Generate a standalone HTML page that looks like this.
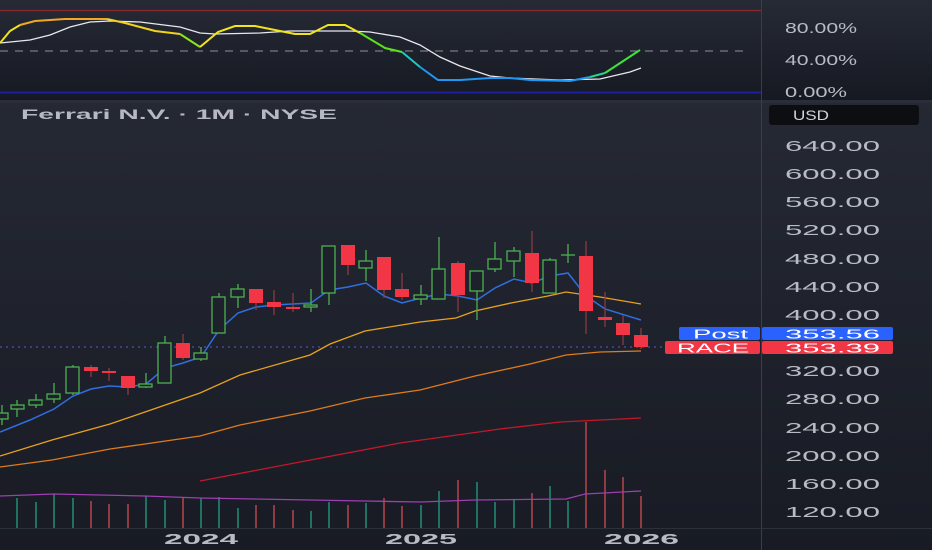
<!DOCTYPE html>
<html><head><meta charset="utf-8"><style>
html,body{margin:0;padding:0;background:#1c1f29;}
svg{display:block}
text{font-family:"Liberation Sans",sans-serif;}
</style></head><body>
<svg width="932" height="550" viewBox="0 0 932 550" xmlns="http://www.w3.org/2000/svg">
<defs>
<linearGradient id="bg" x1="0" y1="0" x2="0" y2="1">
<stop offset="0" stop-color="#282c37"/><stop offset="1" stop-color="#181b24"/>
</linearGradient>
<linearGradient id="tp" x1="0" y1="0" x2="0" y2="1">
<stop offset="0" stop-color="#262a35"/><stop offset="1" stop-color="#161922"/>
</linearGradient>
</defs>
<rect width="932" height="550" fill="url(#bg)"/>
<rect width="932" height="100" fill="url(#tp)"/>
<rect x="0" y="100" width="932" height="3" fill="#2a2e39"/>
<line x1="761.5" y1="0" x2="761.5" y2="550" stroke="#3a3e4a" stroke-width="1"/>
<line x1="0" y1="528.5" x2="932" y2="528.5" stroke="#2c303b"/>

<!-- oscillator -->
<line x1="0" y1="10.5" x2="761" y2="10.5" stroke="#8a2a30" stroke-width="1.2"/>
<line x1="0" y1="51" x2="750" y2="51" stroke="#8d909a" stroke-dasharray="8,7" stroke-width="1"/>
<line x1="0" y1="92.5" x2="761" y2="92.5" stroke="#1c1fa0" stroke-width="2"/>
<polyline fill="none" stroke="#e8e8ee" stroke-width="1.3" points="0,43 30,40 50,35 70,27 90,22 110,21 140,22 180,27 200,33 215,34 260,33 290,31 350,31 370,32 400,37 420,45 440,57 460,66 490,76 510,78 560,80 600,79 630,72 641,68"/>
<polyline fill="none" stroke="#f2e41a" stroke-width="2" points="0,43 10,31 20,25"/>
<polyline fill="none" stroke="#f5a623" stroke-width="2" points="20,25 35,21 50,20 65,19 80,19 107,19"/>
<polyline fill="none" stroke="#f2d21a" stroke-width="2" points="107,19 125,23 155,31 180,34"/>
<polyline fill="none" stroke="#8be51a" stroke-width="2" points="180,34 200,47"/>
<polyline fill="none" stroke="#f2e41a" stroke-width="2" points="200,47 218,32 235,26 255,26 275,30 295,34 310,34 328,25 345,25 360,33"/>
<polyline fill="none" stroke="#5be21a" stroke-width="2" points="360,33 385,48 402,52"/>
<polyline fill="none" stroke="#1fc9c0" stroke-width="2" points="402,52 420,67"/>
<polyline fill="none" stroke="#2196f3" stroke-width="2" points="420,67 438,80 460,80 490,78 510,78 530,80 570,81 590,77"/>
<polyline fill="none" stroke="#22d39a" stroke-width="2" points="590,77 605,73"/>
<polyline fill="none" stroke="#3fe23a" stroke-width="2" points="605,73 640,50"/>
<g fill="#b8bbc4">
<text x="785" y="33" font-size="15" textLength="72" lengthAdjust="spacingAndGlyphs">80.00%</text>
<text x="785" y="65" font-size="15" textLength="72" lengthAdjust="spacingAndGlyphs">40.00%</text>
<text x="785" y="97" font-size="15" textLength="62" lengthAdjust="spacingAndGlyphs">0.00%</text>
</g>

<!-- header -->
<text x="21" y="119" font-size="14" font-weight="bold" fill="#b6b9c2" textLength="316" lengthAdjust="spacingAndGlyphs">Ferrari N.V. · 1M · NYSE</text>
<rect x="769" y="105" width="150" height="20" rx="3" fill="#0d0e12"/>
<text x="793" y="120" font-size="14" fill="#d0d3da" textLength="36" lengthAdjust="spacingAndGlyphs">USD</text>

<!-- price axis -->
<g fill="#b8bbc4" font-size="15">
<text x="785" y="151" textLength="95" lengthAdjust="spacingAndGlyphs">640.00</text>
<text x="785" y="179" textLength="95" lengthAdjust="spacingAndGlyphs">600.00</text>
<text x="785" y="207" textLength="95" lengthAdjust="spacingAndGlyphs">560.00</text>
<text x="785" y="235" textLength="95" lengthAdjust="spacingAndGlyphs">520.00</text>
<text x="785" y="264" textLength="95" lengthAdjust="spacingAndGlyphs">480.00</text>
<text x="785" y="292" textLength="95" lengthAdjust="spacingAndGlyphs">440.00</text>
<text x="785" y="320" textLength="95" lengthAdjust="spacingAndGlyphs">400.00</text>
<text x="785" y="376" textLength="95" lengthAdjust="spacingAndGlyphs">320.00</text>
<text x="785" y="404" textLength="95" lengthAdjust="spacingAndGlyphs">280.00</text>
<text x="785" y="433" textLength="95" lengthAdjust="spacingAndGlyphs">240.00</text>
<text x="785" y="461" textLength="95" lengthAdjust="spacingAndGlyphs">200.00</text>
<text x="785" y="489" textLength="95" lengthAdjust="spacingAndGlyphs">160.00</text>
<text x="785" y="517" textLength="95" lengthAdjust="spacingAndGlyphs">120.00</text>
</g>

<!-- dotted price line -->
<line x1="0" y1="347" x2="761" y2="347" stroke="#5a5fc8" stroke-dasharray="2,4" stroke-width="1"/>

<!-- volume -->
<g stroke-width="2" opacity="0.75">
<g stroke="#1f8f7a">
<line x1="17" y1="528" x2="17" y2="498"/><line x1="36" y1="528" x2="36" y2="502"/><line x1="54" y1="528" x2="54" y2="494"/><line x1="73" y1="528" x2="73" y2="498"/><line x1="146" y1="528" x2="146" y2="496"/><line x1="165" y1="528" x2="165" y2="500"/><line x1="201" y1="528" x2="201" y2="498"/><line x1="219" y1="528" x2="219" y2="497"/><line x1="238" y1="528" x2="238" y2="508"/><line x1="311" y1="528" x2="311" y2="511"/><line x1="329" y1="528" x2="329" y2="502"/><line x1="366" y1="528" x2="366" y2="503"/><line x1="421" y1="528" x2="421" y2="505"/><line x1="439" y1="528" x2="439" y2="491"/><line x1="477" y1="528" x2="477" y2="482"/><line x1="495" y1="528" x2="495" y2="502"/><line x1="514" y1="528" x2="514" y2="500"/><line x1="550" y1="528" x2="550" y2="486"/><line x1="568" y1="528" x2="568" y2="501"/>
</g>
<g stroke="#b8444c">
<line x1="91" y1="528" x2="91" y2="501"/><line x1="109" y1="528" x2="109" y2="504"/><line x1="128" y1="528" x2="128" y2="504"/><line x1="183" y1="528" x2="183" y2="498"/><line x1="256" y1="528" x2="256" y2="505"/><line x1="274" y1="528" x2="274" y2="505"/><line x1="293" y1="528" x2="293" y2="510"/><line x1="348" y1="528" x2="348" y2="505"/><line x1="384" y1="528" x2="384" y2="498"/><line x1="402" y1="528" x2="402" y2="506"/><line x1="458" y1="528" x2="458" y2="480"/><line x1="532" y1="528" x2="532" y2="493"/><line x1="586" y1="528" x2="586" y2="422"/><line x1="605" y1="528" x2="605" y2="470"/><line x1="623" y1="528" x2="623" y2="477"/><line x1="641" y1="528" x2="641" y2="496"/>
</g>
</g>
<polyline fill="none" stroke="#9c3fb0" stroke-width="1.3" points="0,496 54,494 145,496 200,498 310,500 365,501 420,502 475,500 566,499 585,494 641,491"/>

<!-- MAs -->
<polyline fill="none" stroke="#c2182b" stroke-width="1.3" points="200,481 300,462 400,443 500,429 560,422 641,418"/>
<polyline fill="none" stroke="#e07b1a" stroke-width="1.3" points="0,467 52,460 110,449 145,444 200,436 240,425 310,411 365,398 420,390 475,376 530,364 566,355 600,352 641,351"/>
<polyline fill="none" stroke="#e8a21e" stroke-width="1.3" points="0,456 52,440 110,424 145,412 200,393 240,375 310,355 330,344 365,331 420,322 456,318 475,311 511,303 548,296 566,292 600,297 641,304"/>
<polyline fill="none" stroke="#2f6fe0" stroke-width="1.5" points="0,432 30,420 54,409 73,396 91,389 109,386 128,387 146,384 165,368 183,363 201,357 219,330 238,313 256,307 274,305 311,303 329,290 348,287 366,283 384,296 402,303 421,298 439,294 458,296 477,300 495,288 514,279 532,283 550,276 568,273 586,296 605,309 641,320"/>

<!-- candles -->
<g stroke="#4caf50" stroke-width="1.3" fill="#1e212b">
<line x1="2" y1="405" x2="2" y2="425"/><rect x="-5" y="413" width="13" height="6"/>
<line x1="17" y1="400" x2="17" y2="417"/><rect x="11" y="405" width="13" height="4"/>
<line x1="36" y1="394" x2="36" y2="408"/><rect x="29" y="400" width="13" height="5"/>
<line x1="54" y1="383" x2="54" y2="403"/><rect x="47" y="394" width="13" height="5"/>
<line x1="73" y1="365" x2="73" y2="395"/><rect x="66" y="367" width="13" height="26"/>
<line x1="146" y1="373" x2="146" y2="388"/><rect x="139" y="384" width="13" height="3"/>
<line x1="165" y1="336" x2="165" y2="383"/><rect x="158" y="343" width="13" height="40"/>
<line x1="201" y1="347" x2="201" y2="361"/><rect x="194" y="353" width="13" height="6"/>
<line x1="219" y1="293" x2="219" y2="333"/><rect x="212" y="297" width="13" height="36"/>
<line x1="238" y1="284" x2="238" y2="308"/><rect x="231" y="289" width="13" height="8"/>
<line x1="311" y1="289" x2="311" y2="312"/><rect x="304" y="305" width="13" height="2"/>
<line x1="329" y1="246" x2="329" y2="305"/><rect x="322" y="246" width="13" height="47"/>
<line x1="366" y1="250" x2="366" y2="281"/><rect x="359" y="261" width="13" height="7"/>
<line x1="421" y1="285" x2="421" y2="305"/><rect x="414" y="295" width="13" height="4"/>
<line x1="439" y1="237" x2="439" y2="299"/><rect x="432" y="269" width="13" height="30"/>
<line x1="477" y1="271" x2="477" y2="320"/><rect x="470" y="271" width="13" height="20"/>
<line x1="495" y1="242" x2="495" y2="272"/><rect x="488" y="259" width="13" height="10"/>
<line x1="514" y1="247" x2="514" y2="277"/><rect x="507" y="251" width="13" height="10"/>
<line x1="550" y1="258" x2="550" y2="293"/><rect x="543" y="260" width="13" height="33"/>
<line x1="568" y1="244" x2="568" y2="263"/><line x1="561" y1="255" x2="575" y2="255"/>
</g>
<g fill="#f23645" stroke="#8a3a42" stroke-width="1.3">
<line x1="91" y1="365" x2="91" y2="377"/><line x1="109" y1="368" x2="109" y2="381"/><line x1="128" y1="376" x2="128" y2="395"/><line x1="183" y1="334" x2="183" y2="360"/><line x1="256" y1="289" x2="256" y2="310"/><line x1="274" y1="290" x2="274" y2="315"/><line x1="293" y1="293" x2="293" y2="312"/><line x1="348" y1="245" x2="348" y2="275"/><line x1="384" y1="257" x2="384" y2="298"/><line x1="402" y1="273" x2="402" y2="300"/><line x1="458" y1="261" x2="458" y2="312"/><line x1="532" y1="231" x2="532" y2="292"/><line x1="586" y1="241" x2="586" y2="334"/><line x1="605" y1="292" x2="605" y2="327"/><line x1="623" y1="315" x2="623" y2="345"/><line x1="641" y1="328" x2="641" y2="349"/>
</g>
<g fill="#f23645">
<rect x="84" y="367" width="14" height="4"/>
<rect x="102" y="371" width="14" height="2"/>
<rect x="121" y="376" width="14" height="12"/>
<rect x="176" y="343" width="14" height="15"/>
<rect x="249" y="289" width="14" height="14"/>
<rect x="267" y="302" width="14" height="5"/>
<rect x="286" y="307" width="14" height="2"/>
<rect x="341" y="245" width="14" height="20"/>
<rect x="377" y="257" width="14" height="33"/>
<rect x="395" y="289" width="14" height="8"/>
<rect x="451" y="263" width="14" height="32"/>
<rect x="525" y="253" width="14" height="30"/>
<rect x="579" y="256" width="14" height="55"/>
<rect x="598" y="317" width="14" height="3"/>
<rect x="616" y="323" width="14" height="12"/>
<rect x="634" y="335" width="14" height="12"/>
</g>

<!-- price tags -->
<rect x="679" y="327" width="81" height="13" rx="2" fill="#2962ff"/>
<rect x="762" y="327" width="131" height="13" rx="2" fill="#2962ff"/>
<text x="693" y="338.5" font-size="13" fill="#fff" textLength="55" lengthAdjust="spacingAndGlyphs">Post</text>
<text x="785" y="338.5" font-size="13" fill="#fff" textLength="95" lengthAdjust="spacingAndGlyphs">353.56</text>
<rect x="665" y="341" width="95" height="13" rx="2" fill="#f23645"/>
<rect x="762" y="341" width="131" height="13" rx="2" fill="#f23645"/>
<text x="677" y="352.5" font-size="13" fill="#fff" textLength="72" lengthAdjust="spacingAndGlyphs">RACE</text>
<text x="785" y="352.5" font-size="13" fill="#fff" textLength="95" lengthAdjust="spacingAndGlyphs">353.39</text>

<!-- time axis -->
<g fill="#b8bbc4" font-size="15" font-weight="bold">
<text x="164" y="544" textLength="74" lengthAdjust="spacingAndGlyphs">2024</text>
<text x="385" y="544" textLength="72" lengthAdjust="spacingAndGlyphs">2025</text>
<text x="604" y="544" textLength="75" lengthAdjust="spacingAndGlyphs">2026</text>
</g>
</svg>
</body></html>
